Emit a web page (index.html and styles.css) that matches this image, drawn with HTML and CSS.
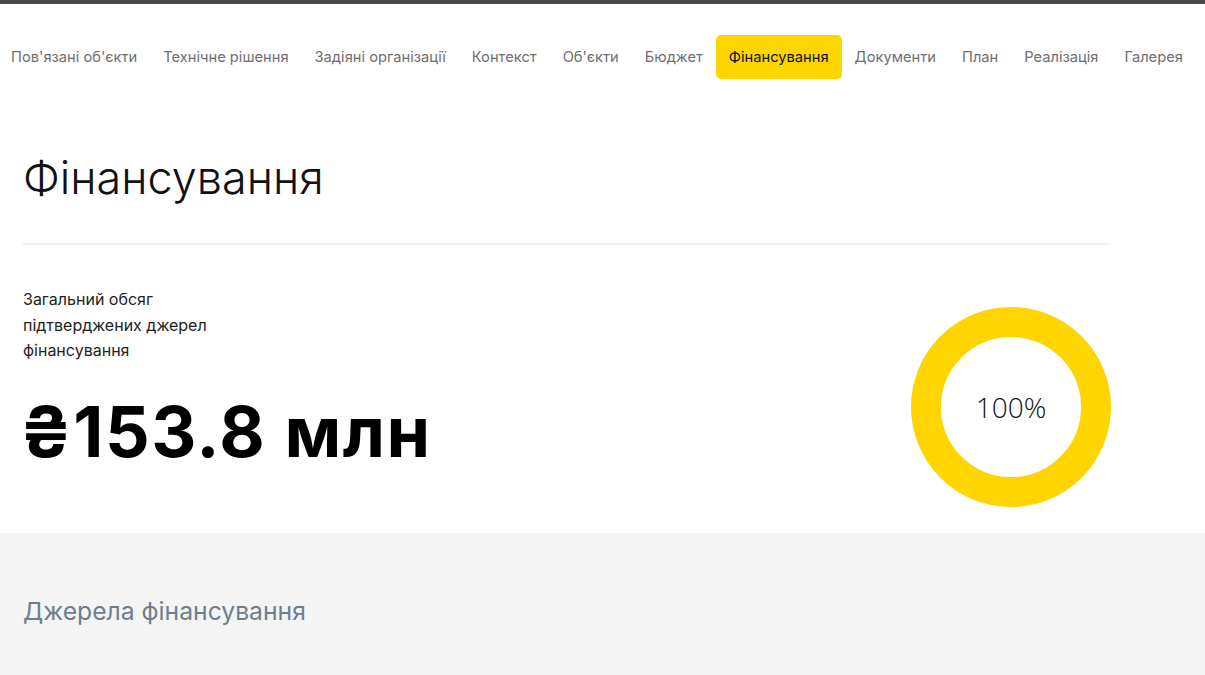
FILE: index.html
```html
<!DOCTYPE html>
<html lang="uk">
  <head>
    <meta charset="UTF-8" />
    <meta name="viewport" content="width=device-width, initial-scale=1.0" />
    <title>Фінансування</title>
    <link rel="stylesheet" href="styles.css">
  </head>
  <body>
    <div class="topbar"></div>

    <nav class="tabs">
      <a href="#">Пов'язані об'єкти</a>
      <a href="#">Технічне рішення</a>
      <a href="#">Задіяні організації</a>
      <a href="#">Контекст</a>
      <a href="#">Об'єкти</a>
      <a href="#">Бюджет</a>
      <a href="#" class="active">Фінансування</a>
      <a href="#">Документи</a>
      <a href="#">План</a>
      <a href="#">Реалізація</a>
      <a href="#">Галерея</a>
    </nav>

    <section class="finance">
      <h1>Фінансування</h1>
      <div class="summary">
        <div class="total">
          <p class="total-label">Загальний обсяг<br />підтверджених джерел<br />фінансування</p>
          <div class="total-value">₴153.8 млн</div>
        </div>
        <div class="donut">
          <span>100%</span>
        </div>
      </div>
    </section>

    <section class="sources">
      <h2>Джерела фінансування</h2>
    </section>
  </body>
</html>
```

FILE: styles.css
```css
body {
  font-family: Inter, "Noto Sans", sans-serif;
  margin: 0;
  padding: 0;
  background-color: #fff;
  color: #111;
  overflow: hidden;
}
.topbar {
  height: 4px;
  background-color: #4a4a4a;
}
.tabs {
  display: flex;
  align-items: center;
  padding: 31px 0 0 0;
  margin-left: -2px;
}
.tabs a {
  display: block;
  padding: 0 13px;
  height: 44px;
  line-height: 45px;
  font-size: 14.7px;
  color: #6f6f6f;
  text-decoration: none;
  border-radius: 5px;
  white-space: nowrap;
}
.tabs a.active {
  background-color: #ffd500;
  color: #111;
}
.finance {
  padding: 0 94px 0 23px;
  height: 454px;
}
h1 {
  font-size: 45px;
  font-weight: 300;
  margin: 0;
  padding: 71px 0 37px;
  line-height: 56px;
  border-bottom: 2px solid #efefef;
}
.summary {
  display: flex;
  justify-content: space-between;
  align-items: flex-start;
  padding-top: 42px;
}
.total-label {
  font-size: 16px;
  line-height: 25.5px;
  margin: 0;
  color: #222;
}
.total-value {
  font-size: 70px;
  font-weight: 700;
  letter-spacing: 1.5px;
  margin-top: 33px;
  margin-left: -3px;
  line-height: 1;
  color: #000;
}
.donut {
  width: 140px;
  height: 140px;
  border: 30px solid #ffd500;
  border-radius: 50%;
  margin-top: 20px;
  display: flex;
  align-items: center;
  justify-content: center;
  font-family: "Open Sans", sans-serif;
  font-weight: 300;
  font-size: 28px;
  color: #111;
}
.sources {
  box-sizing: border-box;
  background-color: #f4f4f4;
  padding: 63px 23px 0;
  height: 142px;
}
h2 {
  margin: 0;
  font-size: 24.7px;
  font-weight: 400;
  color: #6d7f8d;
}
```
